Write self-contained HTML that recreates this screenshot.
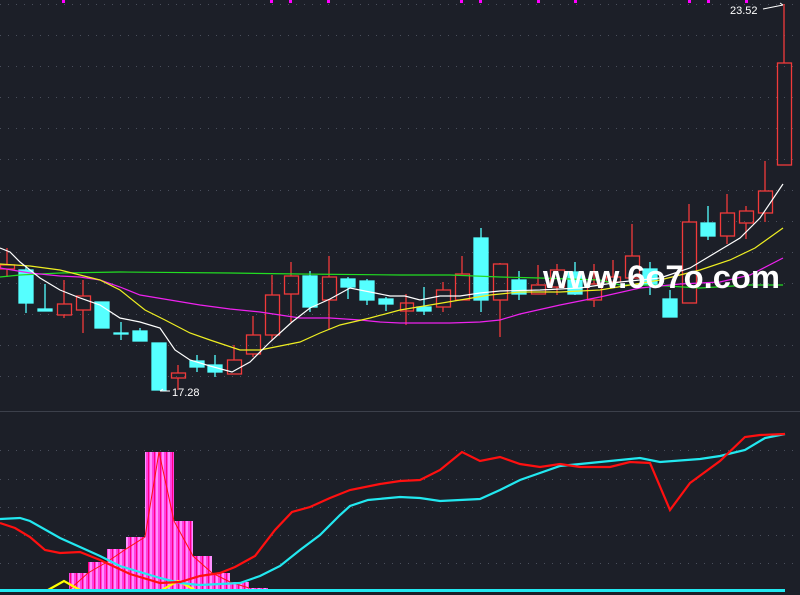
<!DOCTYPE html>
<html><head><meta charset="utf-8"><style>
html,body{margin:0;padding:0;background:#1c1f28;}
svg{display:block}
</style></head><body>
<svg width="800" height="595" viewBox="0 0 800 595" xmlns="http://www.w3.org/2000/svg" font-family="Liberation Sans, sans-serif">
<rect width="800" height="595" fill="#1c1f28"/>
<g stroke="#4a4f5c" stroke-width="1" stroke-dasharray="1,7">
<path d="M0 4.5H800M0 35.5H800M0 66.5H800M0 97.5H800M0 128.5H800M0 159.5H800M0 190.5H800M0 221.5H800M0 252.5H800M0 283.5H800M0 314.5H800M0 345.5H800M0 376.5H800M0 450.5H800M0 479.5H800M0 507.5H800M0 535.5H800M0 563.5H800"/>
</g>
<line x1="0" y1="411.5" x2="800" y2="411.5" stroke="#3c404b"/>
<g fill="#ff00ff">
<rect x="62" y="0" width="3" height="3"/><rect x="270" y="0" width="3" height="3"/><rect x="289" y="0" width="3" height="3"/><rect x="327" y="0" width="3" height="3"/><rect x="460" y="0" width="3" height="3"/><rect x="479" y="0" width="3" height="3"/><rect x="537" y="0" width="3" height="3"/><rect x="574" y="0" width="3" height="3"/><rect x="688" y="0" width="3" height="3"/><rect x="707" y="0" width="3" height="3"/><rect x="745" y="0" width="3" height="3"/>
</g>
<g stroke="#f03a3a" stroke-width="1.3" fill="none">
<path d="M7 248V265M7 269V277"/><rect x="0.5" y="265" width="14" height="4"/>
<path d="M64 280V304M64 315V318"/><rect x="57.5" y="304" width="14" height="11"/>
<path d="M83 280V296M83 310V333"/><rect x="76.5" y="296" width="14" height="14"/>
<path d="M178 365V373M178 378V390"/><rect x="171.5" y="373" width="14" height="5"/>
<path d="M234 345V360"/><rect x="227.5" y="360" width="14" height="14"/>
<path d="M253 316V335M253 354V357"/><rect x="246.5" y="335" width="14" height="19"/>
<path d="M272 275V295M272 335V340"/><rect x="265.5" y="295" width="14" height="40"/>
<path d="M291 262V276M291 294V322"/><rect x="284.5" y="276" width="14" height="18"/>
<path d="M329 256V277M329 300V330"/><rect x="322.5" y="277" width="14" height="23"/>
<path d="M406 294V325"/><rect x="400.5" y="303" width="13" height="8"/>
<path d="M443 282V290M443 307V312"/><rect x="436.5" y="290" width="14" height="17"/>
<path d="M462 256V274"/><rect x="455.5" y="274" width="14" height="26"/>
<path d="M500 263V264M500 300V337"/><rect x="493.5" y="264" width="14" height="36"/>
<path d="M538 265V285"/><rect x="531.5" y="285" width="14" height="9"/>
<path d="M557 264V270M557 287V295"/><rect x="550.5" y="270" width="14" height="17"/>
<path d="M594 264V284M594 300V307"/><rect x="587.5" y="284" width="14" height="16"/>
<path d="M613 260V277M613 282V286"/><rect x="606.5" y="277" width="14" height="5"/>
<path d="M632 224V256M632 278V283"/><rect x="625.5" y="256" width="14" height="22"/>
<path d="M689 204V222"/><rect x="682.5" y="222" width="14" height="81"/>
<path d="M727 194V213M727 236V244"/><rect x="720.5" y="213" width="14" height="23"/>
<path d="M746 206V211M746 223V239"/><rect x="739.5" y="211" width="14" height="12"/>
<path d="M765 161V191M765 213V222"/><rect x="758.5" y="191" width="14" height="22"/>
<path d="M784 4V63"/><rect x="777.5" y="63" width="14" height="102"/>
</g>
<g stroke="#55ffff" stroke-width="1.3" fill="#55ffff">
<path d="M26 266V313M45 284V311M121 322V340M140 328V341M197 355V372M215 355V377M310 271V312M348 277V299M367 279V305M386 297V311M424 287V315M481 228V312M519 271V300M575 262V295M650 262V295M670 290V317M708 206V240"/>
<rect x="19" y="270" width="14" height="33"/>
<rect x="38" y="309" width="14" height="2"/>
<rect x="95" y="302" width="14" height="26"/>
<rect x="114" y="333" width="14" height="1"/>
<rect x="133" y="331" width="14" height="10"/>
<rect x="152" y="343" width="14" height="47"/>
<rect x="190" y="361" width="14" height="6"/>
<rect x="208" y="365" width="14" height="7"/>
<rect x="303" y="276" width="14" height="31"/>
<rect x="341" y="279" width="14" height="8"/>
<rect x="360" y="281" width="14" height="19"/>
<rect x="379" y="299" width="14" height="5"/>
<rect x="417" y="307" width="14" height="4"/>
<rect x="474" y="238" width="14" height="62"/>
<rect x="512" y="280" width="14" height="14"/>
<rect x="568" y="272" width="14" height="22"/>
<rect x="643" y="269" width="14" height="16"/>
<rect x="663" y="299" width="14" height="18"/>
<rect x="701" y="223" width="14" height="13"/>
</g>
<g fill="none" stroke-width="1.2">
<polyline stroke="#22dd22" points="0,277 20,275 60,273 120,272 230,273 300,274 400,275 450,275 500,277 540,278 600,280 620,285 650,285 700,288 750,285 783,285"/>
<polyline stroke="#ee22ee" points="0,268 30,273 60,276 80,277 100,280 120,287 140,295 170,300 200,305 230,309 260,312 300,318 330,318 360,320 380,322 400,323 450,323 480,322 500,320 520,314 560,305 600,297 640,288 680,284 720,282 750,275 783,258"/>
<polyline stroke="#eeee22" points="0,264 30,266 60,270 80,275 100,280 120,290 145,310 165,320 190,333 210,340 240,350 260,350 280,346 300,342 320,333 340,325 370,318 400,310 430,305 460,300 490,295 520,292 560,292 600,290 630,285 660,280 700,270 730,260 755,248 783,228"/>
<polyline stroke="#ffffff" points="0,248 10,252 20,262 40,278 60,290 80,298 100,305 120,318 140,322 160,328 175,350 190,360 210,366 232,372 250,362 270,342 292,322 310,308 330,299 350,288 370,292 390,296 405,296 420,300 440,296 460,296 480,293 500,291 540,290 580,288 620,282 660,278 690,268 720,250 740,238 760,218 783,184"/>
</g>
<text x="172" y="396" fill="#ffffff" font-size="11">17.28</text>
<path d="M160 391H170M160 391l3-2" stroke="#fff" fill="none"/>
<text x="730" y="14" fill="#ffffff" font-size="11">23.52</text>
<path d="M763 9L783 5M783 5l-3-2" stroke="#fff" fill="none"/>
<text x="543" y="288" fill="#ffffff" font-size="32" font-weight="bold" textLength="237" lengthAdjust="spacingAndGlyphs">www.6o7o.com</text>
<defs>
<pattern id="p" width="6" height="10" patternUnits="userSpaceOnUse"><rect width="6" height="10" fill="#ff40e0"/><rect width="2" height="10" fill="#ff90ff"/><rect x="4" width="1" height="10" fill="#ff0080"/></pattern></defs>
<g fill="url(#p)">
<rect x="69" y="573" width="19" height="17"/><rect x="88" y="562" width="19" height="28"/><rect x="107" y="549" width="19" height="41"/><rect x="126" y="537" width="19" height="53"/><rect x="145" y="452" width="29" height="138"/><rect x="174" y="521" width="19" height="69"/><rect x="193" y="556" width="19" height="34"/><rect x="212" y="573" width="18" height="17"/><rect x="230" y="582" width="19" height="8"/><rect x="249" y="588" width="19" height="2"/>
</g>
<polyline fill="none" stroke="#ff1010" stroke-width="1" points="69,590 88,573 107,562 126,549 145,537 159,452 174,521 193,556 212,573 230,582 249,588"/>
<g fill="none" stroke-width="2.2">
<polyline stroke="#ffff00" points="48,590 64,581 80,590"/>
<polyline stroke="#ffff00" points="162,590 178,581 195,590"/>
<polyline stroke="#22e8f0" points="0,519 20,518 30,521 60,538 80,547 100,556 120,566 160,578 180,583 200,585 240,583 260,576 280,566 300,550 320,535 340,515 350,506 368,500 400,497 420,498 440,501 480,499 500,490 520,480 560,466 600,462 640,458 660,462 700,459 720,456 745,450 765,438 785,434"/>
<polyline stroke="#ff1010" points="0,523 15,528 30,537 45,550 60,553 80,552 100,560 130,574 160,583 180,582 200,576 220,573 235,567 255,556 275,530 292,512 310,507 330,498 350,490 380,484 400,481 420,480 440,470 462,452 480,461 500,457 520,464 540,467 560,464 580,467 610,467 630,462 650,463 670,510 690,483 720,461 745,437 760,435 785,434"/>
</g>
<rect x="0" y="589" width="785" height="3" fill="#22e8f0"/>
</svg>
</body></html>
